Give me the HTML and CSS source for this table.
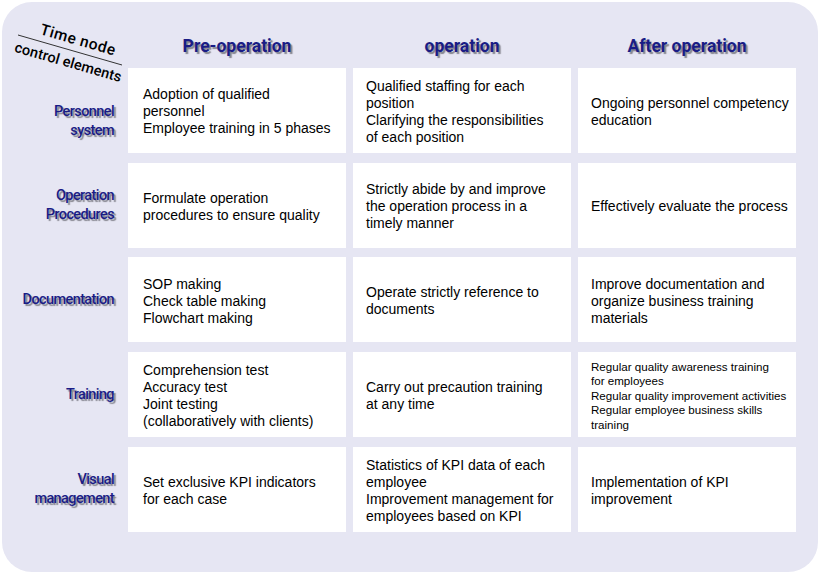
FILE: index.html
```html
<!DOCTYPE html>
<html lang="en">
<head>
<meta charset="utf-8">
<title>Control elements by time node</title>
<link rel="stylesheet" href="styles.css">
</head>
<body>
<div class="panel">
  <div class="corner">
    <svg class="corner-line" width="130" height="80" viewBox="0 0 130 80"><line x1="16" y1="33" x2="120" y2="63" stroke="#333" stroke-width="1"/></svg>
    <span class="corner-top">Time node</span>
    <span class="corner-bottom">control elements</span>
  </div>
  <div class="head">Pre-operation</div>
  <div class="head">operation</div>
  <div class="head">After operation</div>

  <div class="label label-low">Personnel<br>system</div>
  <div class="cell first">Adoption of qualified<br>personnel<br>Employee training in 5 phases</div>
  <div class="cell">Qualified staffing for each<br>position<br>Clarifying the responsibilities<br>of each position</div>
  <div class="cell">Ongoing personnel competency<br>education</div>

  <div class="label">Operation<br>Procedures</div>
  <div class="cell first">Formulate operation<br>procedures to ensure quality</div>
  <div class="cell">Strictly abide by and improve<br>the operation process in a<br>timely manner</div>
  <div class="cell">Effectively evaluate the process</div>

  <div class="label">Documentation</div>
  <div class="cell first">SOP making<br>Check table making<br>Flowchart making</div>
  <div class="cell">Operate strictly reference to<br>documents</div>
  <div class="cell">Improve documentation and<br>organize business training<br>materials</div>

  <div class="label">Training</div>
  <div class="cell first">Comprehension test<br>Accuracy test<br>Joint testing<br>(collaboratively with clients)</div>
  <div class="cell">Carry out precaution training<br>at any time</div>
  <div class="cell small">Regular quality awareness training<br>for employees<br>Regular quality improvement activities<br>Regular employee business skills<br>training</div>

  <div class="label">Visual<br>management</div>
  <div class="cell first">Set exclusive KPI indicators<br>for each case</div>
  <div class="cell">Statistics of KPI data of each<br>employee<br>Improvement management for<br>employees based on KPI</div>
  <div class="cell">Implementation of KPI<br>improvement</div>
</div>
</body>
</html>
```
FILE: styles.css
```css
html, body {
  margin: 0;
  padding: 0;
  background: #ffffff;
}

body {
  width: 820px;
  height: 576px;
  overflow: hidden;
}

.panel {
  margin: 2px;
  width: 816px;
  height: 570px;
  box-sizing: border-box;
  background: #e6e6f3;
  border-radius: 30px;
  display: grid;
  grid-template-columns: 119px 218px 218px 218px;
  grid-template-rows: 56px repeat(5, 85px);
  column-gap: 7px;
  row-gap: 9.75px;
}

.corner {
  position: relative;
  font-family: Roboto, "Noto Sans", sans-serif;
  font-weight: 500;
  color: #000;
}

.corner-line {
  position: absolute;
  left: 0;
  top: 0;
}

.corner-top,
.corner-bottom {
  position: absolute;
  white-space: nowrap;
  line-height: 18px;
  transform: translate(-50%, -50%) rotate(16deg);
}

.corner-top {
  left: 76px;
  top: 38px;
  font-size: 15.5px;
  letter-spacing: 0.5px;
}

.corner-bottom {
  left: 66px;
  top: 61px;
  font-size: 14.5px;
  letter-spacing: 0.1px;
}

.head {
  align-self: end;
  padding-bottom: 1px;
  text-align: center;
  font-family: Roboto, "Noto Sans", sans-serif;
  font-weight: bold;
  font-size: 17.5px;
  line-height: 22px;
  color: #1a1c85;
  text-shadow: 2px 2px 1px #85858f;
}

.label {
  align-self: center;
  text-align: right;
  padding-right: 7px;
  font-family: Roboto, "Noto Sans", sans-serif;
  font-weight: 500;
  font-size: 14.5px;
  line-height: 19px;
  letter-spacing: -0.6px;
  color: #1a1c85;
  text-shadow: 2px 2px 1px #85858f;
}

.label-low {
  padding-top: 22px;
}

.cell {
  background: #ffffff;
  display: flex;
  align-items: center;
  padding: 3px 6px 0 13px;
  font-family: "Liberation Sans", Arial, sans-serif;
  font-size: 14px;
  line-height: 17px;
  color: #000;
  white-space: nowrap;
  overflow: hidden;
}

.cell.first {
  padding-left: 15px;
}

.cell.small {
  font-size: 11.6px;
  line-height: 14.5px;
}
```
